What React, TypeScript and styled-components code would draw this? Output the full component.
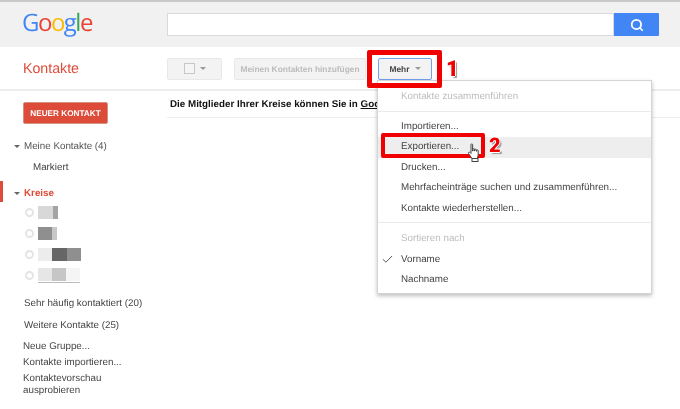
import React from 'react';
import styled, { createGlobalStyle } from 'styled-components';
import { Check, Search } from 'lucide-react';

const GlobalStyle = createGlobalStyle`
  html, body {
    margin: 0;
    padding: 0;
    background: #fff;
    font-family: 'Liberation Sans', Arial, sans-serif;
    text-rendering: geometricPrecision;
  }
`;

const Page = styled.div`
  position: relative;
  width: 680px;
  height: 409px;
  overflow: hidden;
  background: #fff;
  filter: blur(0.35px);
`;

const TopBar = styled.header`
  display: flex;
  align-items: flex-start;
  height: 45px;
  background: #f1f1f1;
  border-top: 2px solid #c9c9c9;
  box-sizing: content-box;
`;

const LogoCell = styled.div`
  width: 167px;
  padding: 6px 0 0 22px;
  box-sizing: border-box;
  font-family: 'Open Sans', sans-serif;
  font-size: 24px;
  font-weight: 500;
  line-height: 30px;
  letter-spacing: -1.5px;
`;

const LogoLetter = styled.span<{ $c: string }>`
  color: ${(p) => p.$c};
`;

const SearchBox = styled.div`
  width: 447px;
  height: 23px;
  margin-top: 11px;
  box-sizing: border-box;
  background: #fff;
  border: 1px solid #d9d9d9;
`;

const SearchButton = styled.div`
  width: 45px;
  height: 23px;
  margin-top: 11px;
  display: flex;
  align-items: center;
  justify-content: center;
  background: #4285f4;
  border-radius: 0 1px 1px 0;
  color: #fff;
`;

const ToolRow = styled.div`
  display: flex;
  align-items: center;
  height: 44px;
  box-sizing: border-box;
  border-bottom: 2px solid #ececec;
  padding-top: 1px;
`;

const PageTitle = styled.div`
  width: 167px;
  padding-left: 23px;
  box-sizing: border-box;
  color: #dd4b39;
  font-size: 14.2px;
`;

const ToolButton = styled.div<{ $w: number; $active?: boolean }>`
  display: flex;
  align-items: center;
  justify-content: center;
  gap: 5px;
  width: ${(p) => p.$w}px;
  height: 22px;
  margin-right: 12px;
  box-sizing: border-box;
  font-size: 8.4px;
  font-weight: bold;
  border-radius: 2px;
  border: 1px solid ${(p) => (p.$active ? '#74a2f0' : '#e8e8e8')};
  background: #f3f3f3;
  color: ${(p) => (p.$active ? '#444' : '#bcbcbc')};
`;

const CheckBox = styled.span`
  width: 9px;
  height: 9px;
  background: #f5f5f5;
  border: 1px solid #c8c8c8;
`;

const Caret = styled.span<{ $c?: string }>`
  display: inline-block;
  width: 0;
  height: 0;
  border-left: 3px solid transparent;
  border-right: 3px solid transparent;
  border-top: 3px solid ${(p) => p.$c ?? '#999'};
`;

const Body = styled.div`
  display: flex;
`;

const Sidebar = styled.aside`
  width: 167px;
  padding-top: 11px;
  box-sizing: border-box;
  font-size: 9.8px;
  color: #444;
`;

const NewButton = styled.div`
  width: 85px;
  height: 22px;
  margin: 0 0 10px 23px;
  display: flex;
  align-items: center;
  justify-content: center;
  box-sizing: border-box;
  background: #dd4b39;
  border: 1px solid #d2907f;
  border-radius: 2px;
  color: #fff;
  font-size: 8.2px;
  font-weight: bold;
`;

const TreeRow = styled.div<{ $active?: boolean }>`
  display: flex;
  align-items: center;
  gap: 4px;
  height: 21px;
  padding: 3px 0 0 11px;
  border-left: 3px solid ${(p) => (p.$active ? '#dd4b39' : 'transparent')};
  font-weight: ${(p) => (p.$active ? 'bold' : 'normal')};
  color: ${(p) => (p.$active ? '#dd4b39' : '#555')};
  box-sizing: border-box;
`;

const SubRow = styled.div`
  height: 21px;
  line-height: 25px;
  padding-left: 33px;
  margin-bottom: 5px;
`;

const CircleRow = styled.div`
  display: flex;
  align-items: center;
  gap: 4px;
  height: 21px;
  padding-left: 25px;
`;

const Radio = styled.span`
  width: 5px;
  height: 5px;
  border: 2px solid #e4e4e4;
  border-radius: 50%;
`;

const Blots = styled.div<{ $line?: boolean }>`
  display: flex;
  height: 13px;
  padding-bottom: ${(p) => (p.$line ? '1px' : '0')};
  border-bottom: ${(p) => (p.$line ? '1px solid #bbb' : 'none')};
`;

const Blot = styled.span<{ $c: string; $w: number }>`
  width: ${(p) => p.$w}px;
  background: ${(p) => p.$c};
`;

const PlainLink = styled.div`
  height: 21.5px;
  line-height: 21.5px;
  padding-left: 24px;
`;

const LinkGroup = styled.div`
  margin-top: 7px;
  padding-bottom: 5px;
`;

const SmallLink = styled.div`
  padding-left: 23px;
  line-height: 12px;
  margin-bottom: 4px;
`;

const Main = styled.main`
  flex: 1;
`;

const Notice = styled.div`
  height: 27px;
  line-height: 27px;
  padding-left: 3px;
  box-sizing: border-box;
  border-bottom: 1px solid #ececec;
  font-size: 9.8px;
  font-weight: bold;
  color: #111;
  white-space: nowrap;
`;

const NoticeLink = styled.span`
  text-decoration: underline;
`;

const Menu = styled.div`
  position: absolute;
  left: 377px;
  top: 80px;
  width: 275px;
  height: 214px;
  box-sizing: border-box;
  background: #fff;
  border: 1px solid #d4d4d4;
  box-shadow: 0 2px 4px rgba(0, 0, 0, 0.25);
  font-size: 9.8px;
  color: #444;
  padding-top: 6px;
`;

const MenuItem = styled.div<{ $off?: boolean; $hover?: boolean }>`
  position: relative;
  height: 20.5px;
  line-height: 20.5px;
  padding-left: 23px;
  color: ${(p) => (p.$off ? '#bdbdbd' : '#444')};
  background: ${(p) => (p.$hover ? '#eeeeee' : 'transparent')};
`;

const MenuRule = styled.div<{ $after: number }>`
  height: 1px;
  background: #ebebeb;
  margin: 3px 0 ${(p) => p.$after}px;
`;

const MenuCheck = styled.span`
  position: absolute;
  left: 3px;
  top: 3px;
  display: flex;
  color: #555;
`;

const RedFrame = styled.div<{ $l: number; $t: number; $w: number; $h: number; $b: number }>`
  position: absolute;
  left: ${(p) => p.$l}px;
  top: ${(p) => p.$t}px;
  width: ${(p) => p.$w}px;
  height: ${(p) => p.$h}px;
  box-sizing: border-box;
  border: ${(p) => p.$b}px solid #f00000;
  border-radius: 2px;
`;

const StepNumber = styled.div<{ $l: number; $t: number; $s: number }>`
  position: absolute;
  left: ${(p) => p.$l}px;
  top: ${(p) => p.$t}px;
  color: #f00000;
  font-family: Roboto, sans-serif;
  font-size: ${(p) => p.$s}px;
  font-weight: 900;
  line-height: 20px;
  text-shadow: -1px 0 0 #fff, 1px 0 0 #fff, 0 -1px 0 #fff, 0 1px 0 #fff, 2px 2px 1px #999;
`;

const HandCursor = styled.svg`
  position: absolute;
  left: 467px;
  top: 143px;
`;

const logo: [string, string][] = [
  ['G', '#4285f4'],
  ['o', '#ea4335'],
  ['o', '#fbbc05'],
  ['g', '#4285f4'],
  ['l', '#34a853'],
  ['e', '#ea4335'],
];

const circles: [string, number][][] = [
  [['#d8d8d8', 15], ['#a4a4a4', 5]],
  [['#8f8f8f', 14], ['#c8c8c8', 5]],
  [['#ececec', 14], ['#666', 15], ['#8f8f8f', 14]],
  [['#e6e6e6', 14], ['#c6c6c6', 14], ['#f5f5f5', 14]],
];

export default function App() {
  return (
    <Page>
      <GlobalStyle />
      <TopBar>
        <LogoCell>
          {logo.map(([letter, color], i) => (
            <LogoLetter key={i} $c={color}>
              {letter}
            </LogoLetter>
          ))}
        </LogoCell>
        <SearchBox />
        <SearchButton>
          <Search size={14} strokeWidth={3} />
        </SearchButton>
      </TopBar>
      <ToolRow>
        <PageTitle>Kontakte</PageTitle>
        <ToolButton $w={55}>
          <CheckBox />
          <Caret />
        </ToolButton>
        <ToolButton $w={132}>Meinen Kontakten hinzufügen</ToolButton>
        <ToolButton $w={54} $active>
          <span>Mehr</span>
          <Caret />
        </ToolButton>
      </ToolRow>
      <Body>
        <Sidebar>
          <NewButton>NEUER KONTAKT</NewButton>
          <TreeRow>
            <Caret $c="#666" />
            Meine Kontakte (4)
          </TreeRow>
          <SubRow>Markiert</SubRow>
          <TreeRow $active>
            <Caret $c="#666" />
            Kreise
          </TreeRow>
          {circles.map((blots, i) => (
            <CircleRow key={i}>
              <Radio />
              <Blots $line={i === 3}>
                {blots.map(([color, width], j) => (
                  <Blot key={j} $c={color} $w={width} />
                ))}
              </Blots>
            </CircleRow>
          ))}
          <LinkGroup>
            <PlainLink>Sehr häufig kontaktiert (20)</PlainLink>
            <PlainLink>Weitere Kontakte (25)</PlainLink>
          </LinkGroup>
          <SmallLink>Neue Gruppe...</SmallLink>
          <SmallLink>Kontakte importieren...</SmallLink>
          <SmallLink>
            Kontaktevorschau
            <br />
            ausprobieren
          </SmallLink>
        </Sidebar>
        <Main>
          <Notice>
            Die Mitglieder Ihrer Kreise können Sie in <NoticeLink>Goo</NoticeLink>
          </Notice>
        </Main>
      </Body>
      <Menu>
        <MenuItem $off>Kontakte zusammenführen</MenuItem>
        <MenuRule $after={5} />
        <MenuItem>Importieren...</MenuItem>
        <MenuItem $hover>Exportieren...</MenuItem>
        <MenuItem>Drucken...</MenuItem>
        <MenuItem>Mehrfacheinträge suchen und zusammenführen...</MenuItem>
        <MenuItem>Kontakte wiederherstellen...</MenuItem>
        <MenuRule $after={6} />
        <MenuItem $off>Sortieren nach</MenuItem>
        <MenuItem>
          <MenuCheck>
            <Check size={13} strokeWidth={1.8} />
          </MenuCheck>
          Vorname
        </MenuItem>
        <MenuItem>Nachname</MenuItem>
      </Menu>
      <RedFrame $l={367} $t={50} $w={75} $h={38} $b={5} />
      <StepNumber $l={446} $t={60} $s={22}>1</StepNumber>
      <RedFrame $l={381} $t={133} $w={104} $h={25} $b={4} />
      <StepNumber $l={489} $t={135} $s={20}>2</StepNumber>
      <HandCursor width="14" height="20" viewBox="0 0 14 20">
        <path
          d="M4 1.500c0-.8 1.600-.8 1.600 0V8h.4V6.200c0-.8 1.500-.8 1.500 0V8h.4V6.800c0-.8 1.500-.8 1.500 0V8.300h.3V7.500c0-.8 1.500-.8 1.500 0V12c0 1.500-.8 2.500-1.200 3.500H5L1.500 10.500c-.6-1 .7-1.800 1.500-1L4 10.500z"
          fill="#fff"
          stroke="#444"
          strokeWidth="1"
        />
        <rect x="5" y="15.500" width="6" height="3" fill="#fff" stroke="#444" strokeWidth="1" />
      </HandCursor>
    </Page>
  );
}
